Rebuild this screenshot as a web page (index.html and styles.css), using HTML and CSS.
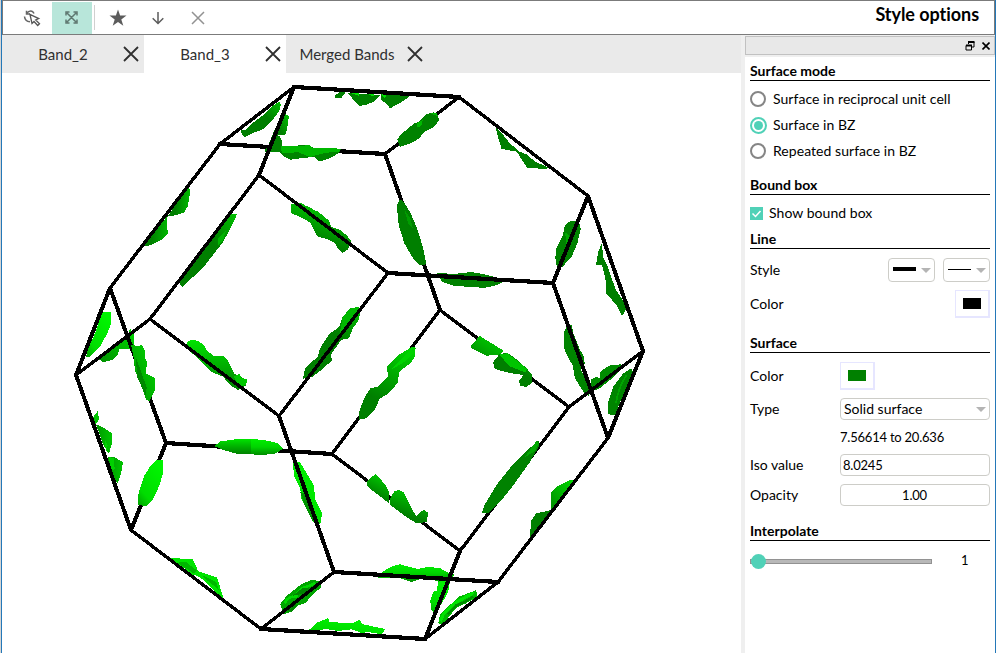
FILE: index.html
```html
<!DOCTYPE html>
<html lang="en">
<head>
<meta charset="utf-8">
<title>Surface viewer</title>
<link rel="stylesheet" href="styles.css">
</head>
<body>
<div class="window">
  <header class="toolbar">
    <div class="tools">
      <button class="tool rotate"><svg width="18" height="18" viewBox="0 0 18 18"><path d="M7 5H3.500V1.800M3.700 4.500C6 1 9.500 1 11 4.500M1.500 7.500C1.800 11 4 12.500 7 12.800" fill="none" stroke="#666" stroke-width="1.500"/><path d="M7 5.500l2 9 2-2 3.700 4 1.800-1.800-3.800-3.700 3-1.400z" fill="#fff" stroke="#555" stroke-width="1.300"/></svg></button>
      <button class="tool active"><svg width="13" height="13" viewBox="0 0 13 13"><path d="M2 2l9 9M11 2l-9 9M1 4.500V1h3.500M8.500 1H12v3.500M12 8.500V12H8.500M4.500 12H1V8.500" fill="none" stroke="#5f7770" stroke-width="1.500"/></svg></button>
      <span class="separator"></span>
      <button class="tool star"><svg width="18" height="18" viewBox="0 0 18 18"><path d="M9 .5l2.100 6h6.400l-5.200 3.900 2 6.300L9 12.900l-5.300 3.800 2-6.300L.5 6.500h6.400z" fill="#5c5c5c"/></svg></button>
      <button class="tool down"><svg width="14" height="14" viewBox="0 0 14 14"><path d="M7 1v11.500M1.700 7.200L7 12.500l5.300-5.300" fill="none" stroke="#5c5c5c" stroke-width="1.500"/></svg></button>
      <button class="tool"><svg width="14" height="14" viewBox="0 0 14 14"><path d="M1 1l12 12M13 1L1 13" stroke="#929292" stroke-width="1.500"/></svg></button>
    </div>
    <h1>Style options</h1>
  </header>
  <div class="body">
    <main class="viewer">
      <nav class="tabs">
        <div class="tab"><span>Band_2</span><svg class="close" viewBox="0 0 16 16"><path d="M1 1l14 14M15 1L1 15"/></svg></div>
        <div class="tab current"><span>Band_3</span><svg class="close" viewBox="0 0 16 16"><path d="M1 1l14 14M15 1L1 15"/></svg></div>
        <div class="tab"><span>Merged Bands</span><svg class="close" viewBox="0 0 16 16"><path d="M1 1l14 14M15 1L1 15"/></svg></div>
      </nav>
      <svg class="scene" width="739" height="580" viewBox="2 73 739 580">
        <defs>
          <linearGradient id="ne" x1="0" y1="1" x2="1" y2="0"><stop offset=".6" stop-color="#007f00"/><stop offset="1" stop-color="#00c000"/></linearGradient>
          <linearGradient id="e" x1="0" y1="0" x2="1" y2="0"><stop offset=".35" stop-color="#007f00"/><stop offset="1" stop-color="#00b800"/></linearGradient>
          <linearGradient id="facet" x1="0" y1="0" x2="1" y2="0"><stop offset="0" stop-color="#009800"/><stop offset="1" stop-color="#00c400"/></linearGradient>
          <linearGradient id="n" x1=".3" y1="1" x2=".7" y2="0"><stop offset=".25" stop-color="#007f00"/><stop offset="1" stop-color="#00d000"/></linearGradient>
          <linearGradient id="mid" x1="0" y1="1" x2="1" y2="0"><stop offset="0" stop-color="#008c00"/><stop offset=".5" stop-color="#00b400"/><stop offset="1" stop-color="#00d800"/></linearGradient>
          <linearGradient id="bright" x1="0" y1="1" x2=".6" y2="0"><stop offset="0" stop-color="#00a000"/><stop offset=".3" stop-color="#00dc00"/><stop offset="1" stop-color="#00f400"/></linearGradient>
          <linearGradient id="lens" x1="0" y1="0" x2="0" y2="1"><stop offset="0" stop-color="#00e400"/><stop offset=".45" stop-color="#00b400"/><stop offset="1" stop-color="#008000"/></linearGradient>
          <linearGradient id="lens2" x1="0" y1="0" x2="0" y2="1"><stop offset="0" stop-color="#00f000"/><stop offset=".5" stop-color="#00d400"/><stop offset="1" stop-color="#008c00"/></linearGradient>
        </defs>
        <!-- Surface pockets behind the zone edges -->
        <g class="pockets">
          <g transform="translate(60 80) scale(.33333)">
            <path fill="url(#e)" d="M386 318L390 330 388 355 383 380 372 397 350 405 322 410z"/>
            <path fill="url(#e)" d="M320 411L322 445 324 460 308 477 270 496 246 500z"/>
            <path fill="url(#ne)" d="M512 402L530 401 529 410 490 485 430 562 368 620 360 615 361 600z"/>
            <path fill="#00b400" d="M498 450L475 475 475 494 489 482z"/>
          </g>
          <g transform="translate(240 80) scale(.33333)">
            <path fill="url(#ne)" d="M3 148L15 151 35 131 70 105 95 80 118 65 123 73 118 92 96 122 68 148 42 158 15 171 5 162z"/>
            <path fill="url(#ne)" d="M135 102L146 108 145 125 139 155 135 165 115 166 124 178 126 203 110 215 74 217 84 198 105 145z"/>
            <path fill="#007f00" d="M284 48L296 38 304 31 316 39 303 55 287 54z"/>
            <path fill="#008000" d="M322 38L420 46 402 65 379 74 360 78 342 61z"/>
            <path fill="#008000" d="M424 42L509 49 491 62 473 73 450 85 440 72 424 60z"/>
            <path fill="#00e000" d="M335 40l20-2 3 10zM383 44l22-3-5 8zM426 42h12l-2 12-8-4z"/>
            <path fill="url(#n)" d="M153 373L185 369 205 383 235 395 268 423 273 440 300 450 322 468 335 486 322 510 308 518 294 505 284 488 264 478 233 470 220 446 210 427 180 411 153 399z"/>
            <path fill="#00b800" d="M193 375l8 17 28 7-12-13z"/>
          </g>
          <g transform="translate(380 80) scale(.33333)">
            <path fill="#007f00" d="M346 140L364 158 388 188 417 214 441 224 465 245 510 264 492 267 442 263 427 242 411 215 365 207 355 176z"/>
            <path fill="#008200" d="M555 435L572 422 586 424 600 434 602 448 592 490 575 530 548 560 530 558 526 535 528 508 540 482 549 465z"/>
            <path fill="#00aa00" d="M556 458l12 8-2 18-8 12z"/>
            <path fill="#008200" d="M169 578L220 582 275 576 308 582 350 592 369 606 345 617 311 624 275 620 225 619 186 605z"/>
            <path fill="#008000" d="M667 485L668 530 682 558 697 601 708 630 742 682 726 708 711 678 679 640 678 605 666 554 648 555 655 515z"/>
          </g>
          <g transform="translate(60 290) scale(.33333)">
            <path fill="url(#bright)" d="M127 67L152 66 154 98 142 130 120 170 88 203 79 200 82 178 103 135z"/>
            <path fill="url(#mid)" d="M112 205L137 187 180 151 205 133 210 116 221 130 222 163 209 178 177 178 174 195 158 209 130 217z"/>
            <path fill="url(#lens)" d="M380 156L392 150 412 152 430 163 442 183 460 197 488 197 503 210 524 252 562 270 558 286 535 300 511 286 489 260 455 246 437 228 410 202 384 178z"/>
            <path fill="#00c800" d="M520 260l20-9 3 12 19 5-4 18-20 2z"/>
            <path fill="#00c400" d="M97 384L107 372 113 363 117 388 107 403z"/>
            <path fill="url(#facet)" d="M108 403L130 413 156 430 155 463 147 492 130 465z"/>
            <path fill="url(#facet)" d="M142 500L160 500 189 516 184 548 172 582 155 544z"/>
            <path fill="#00d000" d="M146 501l15 3 3 33-10 5zM133 448l10 17-4 20z"/>
          </g>
          <g transform="translate(270 260) scale(.33333)">
            <path fill="url(#ne)" d="M240 145L268 140 271 160 264 185 250 202 237 235 213 240 183 284 186 301 158 327 127 350 99 356 105 325 143 290 150 265 177 223 207 201 218 171z"/>
            <path fill="#00b800" d="M218 171l22-25 28-2-5 20-28 30-25 23z"/>
          </g>
          <g transform="translate(460 300) scale(.33333)">
            <path fill="#008400" d="M325 72L336 76 340 101 350 125 360 150 370 164 374 190 362 210 385 250 388 291 370 275 345 235 338 195 331 185 312 145 312 95z"/>
            <path fill="#008c00" d="M393 238L410 230 421 237 421 215 447 197 482 193 485 208 450 240 419 265 388 277z"/>
            <path fill="#008400" d="M490 220L513 205 519 214 515 235 497 270 479 310 466 345 445 343 444 307 460 260z"/>
            <path fill="none" stroke="#00a400" stroke-width="5" d="M500 225Q475 260 468 310"/>
            <path fill="url(#mid)" d="M347 541L330 540 290 560 273 578 274 630z"/>
            <path fill="#008000" d="M275 630L228 640 214 662 209 716 245 674z"/>
          </g>
          <g transform="translate(120 430) scale(.33333)">
            <path fill="url(#bright)" d="M518 98L540 96 554 120 581 165 586 209 605 246 604 280 585 283 555 229 543 203 541 175 523 140z"/>
            <path fill="#009400" d="M540 185l20 10 30 75-12 4-24-48z"/>
            <path fill="#00e400" d="M142 384L218 387 235 424 291 442 299 467 311 508 288 488 258 456 232 437 215 434 195 415 171 405z"/>
            <path fill="#00b600" d="M171 398l27-2 32 25-8 10zM242 434l47 22 7 23-33-27z"/>
            <path fill="#00a400" d="M481 522L500 498 541 465 570 451 603 452 602 474 585 487 555 520 535 526 518 544 490 553z"/>
            <path fill="none" stroke="#00d800" stroke-width="8" d="M494 520q12-24 35-20 7-26 29-29l29-12"/>
            <path fill="#008600" d="M518 498l31-25 20 3-15 14-25 5zM492 540l20-4 10-18 8 9-14 18z"/>
          </g>
          <g transform="translate(290 430) scale(.33333)">
            <path fill="url(#lens2)" d="M264 443L280 424 303 410 330 403 364 412 384 417 415 410 451 415 475 428 494 434 481 454 445 455 415 443 390 447 365 456 330 445z"/>
            <path fill="url(#bright)" d="M445 455L481 450 474 488 455 520 434 549 423 540 421 512 429 486 440 482z"/>
            <path fill="url(#bright)" d="M57 600L80 578 115 564 119 576 185 580 208 570 219 583 285 597 276 613 240 607 212 608 185 598 145 603 115 598z"/>
            <path fill="#00b800" d="M445 578L450 553 480 525 506 500 545 486 558 480 563 500 530 519 498 534 465 575 449 584z"/>
            <path fill="none" stroke="#008c00" stroke-width="7" d="M474 553l25-27 25-10 25-16"/>
            <path fill="none" stroke="#00e400" stroke-width="9" d="M451 573l10-22 32-31 58-32"/>
          </g>
        </g>
        <!-- Brillouin zone edges -->
        <path class="edge flat" d="M294 87L459 97M425 639L261 629M220 144L385 154M388 273L553 283M166 443L332 454M334 572L498 582"/>
        <path class="edge steep" d="M588 196L643 351L608 438M131 530L76 375L110 288M385 154L440 310M294 87L259 175M553 283L588 196M553 283L608 438M110 288L166 443L131 530M279 416L334 572M460 551L425 639"/>
        <path class="edge slant" d="M459 97L588 196M608 438L498 582L425 639M261 629L131 530M110 288L220 144L294 87M385 154L459 97M259 175L388 273M259 175L150 319M388 273L279 416M440 310L332 454M440 310L569 407L643 351M569 407L460 551M150 319L76 375M150 319L279 416M334 572L261 629M332 454L460 551"/>
        <!-- Surface pockets in front of the edges -->
        <g class="pockets">
          <g transform="translate(240 80) scale(.33333)">
            <path fill="#008200" d="M472 177L486 160 503 147 520 132 540 123 560 102 582 97 595 106 596 123 580 142 555 155 535 177 513 190 480 201z"/>
            <path fill="#00b800" d="M530 130l18-10-3 16-12 7zM569 101l21-3 3 10z"/>
            <path fill="#007f00" d="M470 375L480 358 491 365 512 400 533 450 550 506 559 553 540 556 522 540 493 490 476 435z"/>
            <path fill="#009c00" d="M492 386l20 31 7 29-14-16z"/>
            <path fill="#008400" d="M88 188l14-22 17 2 7 15-1 20-34 10z"/>
            <path fill="#008400" d="M76 206L124 199 160 198 190 195 212 201 245 207 303 206 296 220 266 236 237 245 222 231 198 233 151 239 132 229 119 217 76 216z"/>
            <path fill="#00b800" d="M123 199l88-3 6 7 86 3-6 10-40 2-47 13-35-14-50 2z"/>
            <path stroke="#000" stroke-width="12" d="M162 21L57 285"/>
          </g>
          <g transform="translate(60 290) scale(.33333)">
            <path fill="url(#mid)" d="M213 164L233 168 246 165 254 180 255 205 261 214 258 250 285 264 284 302 268 335 258 328 240 275 225 242 221 204z"/>
            <path fill="#008800" d="M227 200l15 42 18 50-3 24-25-53z"/>
            <path fill="url(#bright)" d="M290 511L309 510 309 550 298 587 278 630 258 648 235 645 235 613 252 558 270 530z"/>
            <path fill="url(#lens)" d="M462 468L482 454 525 448 573 447 573 493 530 491 490 480z"/>
            <path fill="url(#lens2)" d="M573 447L613 450 654 460 669 476 648 490 612 495 573 493z"/>
          </g>
          <g transform="translate(270 260) scale(.33333)">
            <path fill="url(#n)" d="M429 259L437 264 434 291 421 310 388 335 383 368 363 393 348 405 329 416 314 451 288 475 268 479 267 458 282 415 301 385 325 379 353 350 352 319 387 284z"/>
            <path fill="#00d400" d="M425 268l-63 62 38-22 31-29z"/>
          </g>
          <g transform="translate(460 300) scale(.33333)">
            <path fill="url(#mid)" d="M34 136L59 108 82 122 132 153 121 164 80 167 50 153 34 145z"/>
            <path fill="url(#ne)" d="M99 187L118 163 142 158 172 180 202 207 215 224 215 250 199 261 180 257 177 243 190 225 150 219 104 207z"/>
            <path fill="#00c400" d="M118 164l24-4 30 23 30 24-7 10-46-18z"/>
            <path fill="#008200" d="M235 420L238 437 209 487 163 552 121 605 86 640 66 639 75 612 113 550 159 493z"/>
            <path fill="#00a800" d="M229 423l8 9-13 22-30 18z"/>
          </g>
          <g transform="translate(290 430) scale(.33333)">
            <path fill="url(#n)" d="M232 155L244 142 256 132 270 145 291 172 298 188 296 219 274 202 246 181 232 168z"/>
            <path fill="url(#n)" d="M299 208L313 184 326 180 340 186 363 230 378 259 391 245 402 240 413 247 412 276 380 280 350 262 320 239 300 225z"/>
          </g>
        </g>
      </svg>
    </main>
    <aside class="dock">
      <div class="dock-title">
        <svg width="10" height="10" viewBox="0 0 10 10"><path d="M3.500 3V1H9v5H7M1 4.500h5.500V9H1z" fill="none" stroke="#000"/><path d="M3 1h6.500M1 4.500h6" stroke="#000" stroke-width="2"/></svg>
        <svg width="8" height="8" viewBox="0 0 8 8"><path d="M.5.5l7 7M7.500.5l-7 7" stroke="#000" stroke-width="1.600"/></svg>
      </div>
      <div class="panel">
        <h2>Surface mode</h2>
        <div class="options">
          <label class="choice"><i class="radio"></i><span class="label">Surface in reciprocal unit cell</span></label>
          <label class="choice"><i class="radio on"></i><span class="label">Surface in BZ</span></label>
          <label class="choice"><i class="radio"></i><span class="label">Repeated surface in BZ</span></label>
        </div>
        <h2 class="spaced">Bound box</h2>
        <div class="options">
          <label class="choice check"><i class="box"><svg width="13" height="13" viewBox="0 0 13 13"><path d="M2.500 6.500l3 3 5-5.500" fill="none" stroke="#fff" stroke-width="1.500"/></svg></i><span class="label">Show bound box</span></label>
        </div>
        <h2 class="tight">Line</h2>
        <div class="line-rows">
          <div class="row"><span class="label">Style</span><div class="pair"><div class="combo"><i class="stroke thick"></i><i class="arrow"></i></div><div class="combo"><i class="stroke"></i><i class="arrow"></i></div></div></div>
          <div class="row"><span class="label">Color</span><button class="swatch black"><i></i></button></div>
        </div>
        <h2 class="spaced">Surface</h2>
        <div class="form">
          <span class="label">Color</span><button class="swatch green"><i></i></button>
          <span class="label">Type</span><div class="field select"><span>Solid surface</span><i class="arrow"></i></div>
          <span></span><span class="number">7.56614 to 20.636</span>
          <span class="label">Iso value</span><div class="field number">8.0245</div>
          <span class="label">Opacity</span><div class="field number centered">1.00</div>
        </div>
        <h2 class="spaced">Interpolate</h2>
        <div class="slider-row"><div class="slider"><i class="thumb"></i></div><span class="number">1</span></div>
      </div>
    </aside>
  </div>
</div>
</body>
</html>
```
FILE: styles.css
```css
* { box-sizing: border-box; }
body {
  margin: 0;
  width: 996px;
  height: 653px;
  overflow: hidden;
  background: #fff;
  color: #000;
  font: 14px/17px Lato, "Liberation Sans", sans-serif;
}
button { padding: 0; border: 0; background: none; font: inherit; }
svg, i { display: block; flex: none; }
.window {
  height: 653px;
  padding-left: 1px;
  border-left: 1px solid #d5d5d5;
  border-right: 1px solid #2478b8;
  box-shadow: inset 1px 0 #2478b8;
}
.toolbar {
  display: flex;
  justify-content: space-between;
  height: 35px;
  border: 1px solid #7b7b7b;
  padding-right: 15px;
}
.tools { display: flex; align-items: center; padding-left: 9px; }
.tool { display: flex; align-items: center; justify-content: center; width: 40px; height: 32px; }
.tool.active { background: #b8e6da; padding-right: 1px; }
.separator { width: 1px; height: 25px; margin: 0 3px 0 2px; background: #d0d0d0; }
h1 { margin: 0; font-size: 18px; line-height: 26px; font-weight: 700; letter-spacing: -.05px; }
.body { display: flex; height: 618px; }
.viewer { width: 739px; flex: none; }
.tabs { display: flex; height: 38px; background: #eaeaea; color: #303030; font-size: 15px; }
.tab { display: flex; align-items: center; justify-content: flex-end; width: 142px; padding: 2px 5px 0 0; }
.tab span { flex: 1; margin-bottom: 1px; text-align: center; }
.tab:not(:last-child) span { padding-left: 5px; padding-right: 14px; }
.tab:not(:last-child) .close { margin-left: -10px; }
.tab.current { background: #fff; }
.tab:last-child { width: 140px; padding-right: 3px; }
.tab:last-child span { padding-left: 1px; }
.close { width: 16px; height: 16px; margin-bottom: 3px; fill: none; stroke: #303030; stroke-width: 1.8; }
.scene { overflow: hidden; }
.pockets { shape-rendering: crispEdges; }
.edge { fill: none; stroke: #000; stroke-linejoin: round; stroke-linecap: round; shape-rendering: crispEdges; }
.flat { stroke-width: 4.2; }
.steep { stroke-width: 4; }
.slant { stroke-width: 3.4; }
.dock { flex: 1; min-width: 0; padding: 1px 0 0 4px; background: #efefef; }
.dock-title {
  display: flex;
  align-items: center;
  justify-content: flex-end;
  gap: 7px;
  height: 19px;
  padding-right: 4px;
  border: 1px solid #c1c1c1;
  background: #e8e8e8;
}
.panel { height: 600px; margin-top: 2px; padding: 6px 5px 0; background: #fff; }
h2 { margin: 0; height: 18px; font-size: 14px; line-height: 15px; font-weight: 700; border-bottom: 1px solid #000; }
.spaced { margin-top: 14px; }
.tight { margin-top: 5px; }
.options { padding-top: 5px; }
.options + .spaced { margin-top: 13px; }
.label { margin-bottom: 2px; }
.choice { display: flex; align-items: center; gap: 7px; height: 26px; letter-spacing: .05px; }
.radio { width: 16px; height: 16px; border: 2px solid #858585; border-radius: 50%; }
.radio.on { width: 17px; height: 17px; margin-right: -1px; border-color: #50d1b7; padding: 2px; background: #50d1b7 content-box; }
.box { width: 13px; height: 13px; background: #50d1b7; }
.check { gap: 6px; }
.line-rows { padding-top: 4px; }
.row { display: flex; align-items: center; justify-content: space-between; height: 34px; }
.pair { display: flex; gap: 8px; }
.combo { display: flex; align-items: center; justify-content: space-between; width: 47px; height: 24px; padding: 0 3px 0 4px; border: 1px solid #cdcdc8; border-radius: 4px; }
.stroke { width: 23px; height: 1px; margin-bottom: 1px; background: #000; }
.stroke.thick { height: 4px; margin-bottom: 2px; }
.arrow { border: 5px solid transparent; border-top-color: #b4b4b4; border-bottom: 0; }
.swatch { display: flex; align-items: center; justify-content: center; width: 35px; height: 28px; border: 1px solid #e6e6ff; border-right-width: 2px; border-bottom-width: 2px; }
.swatch i { width: 18px; height: 11px; background: #000; }
.swatch.green i { background: #008000; }
.form { display: grid; grid-template-columns: 90px 150px; grid-template-rows: 34px 32px 24px 32px 28px; align-items: center; padding-top: 6px; }
.number { font-size: 13px; letter-spacing: -.22px; }
.field { height: 22px; padding: 0 3px; line-height: 20px; border: 1px solid #cdcdc8; border-radius: 4px; }
.field.number { padding-left: 2px; }
.select { display: flex; align-items: center; justify-content: space-between; }
.centered { text-align: center; }
.slider-row { display: flex; align-items: center; height: 26px; margin-top: 7px; }
.slider { display: flex; align-items: center; width: 182px; height: 5px; margin-right: 29px; border: 1px solid #929292; background: #b8b8b8; }
.slider-row .number { padding-bottom: 2px; }
.thumb { width: 15px; height: 15px; border-radius: 50%; background: #50d1b7; }
```
